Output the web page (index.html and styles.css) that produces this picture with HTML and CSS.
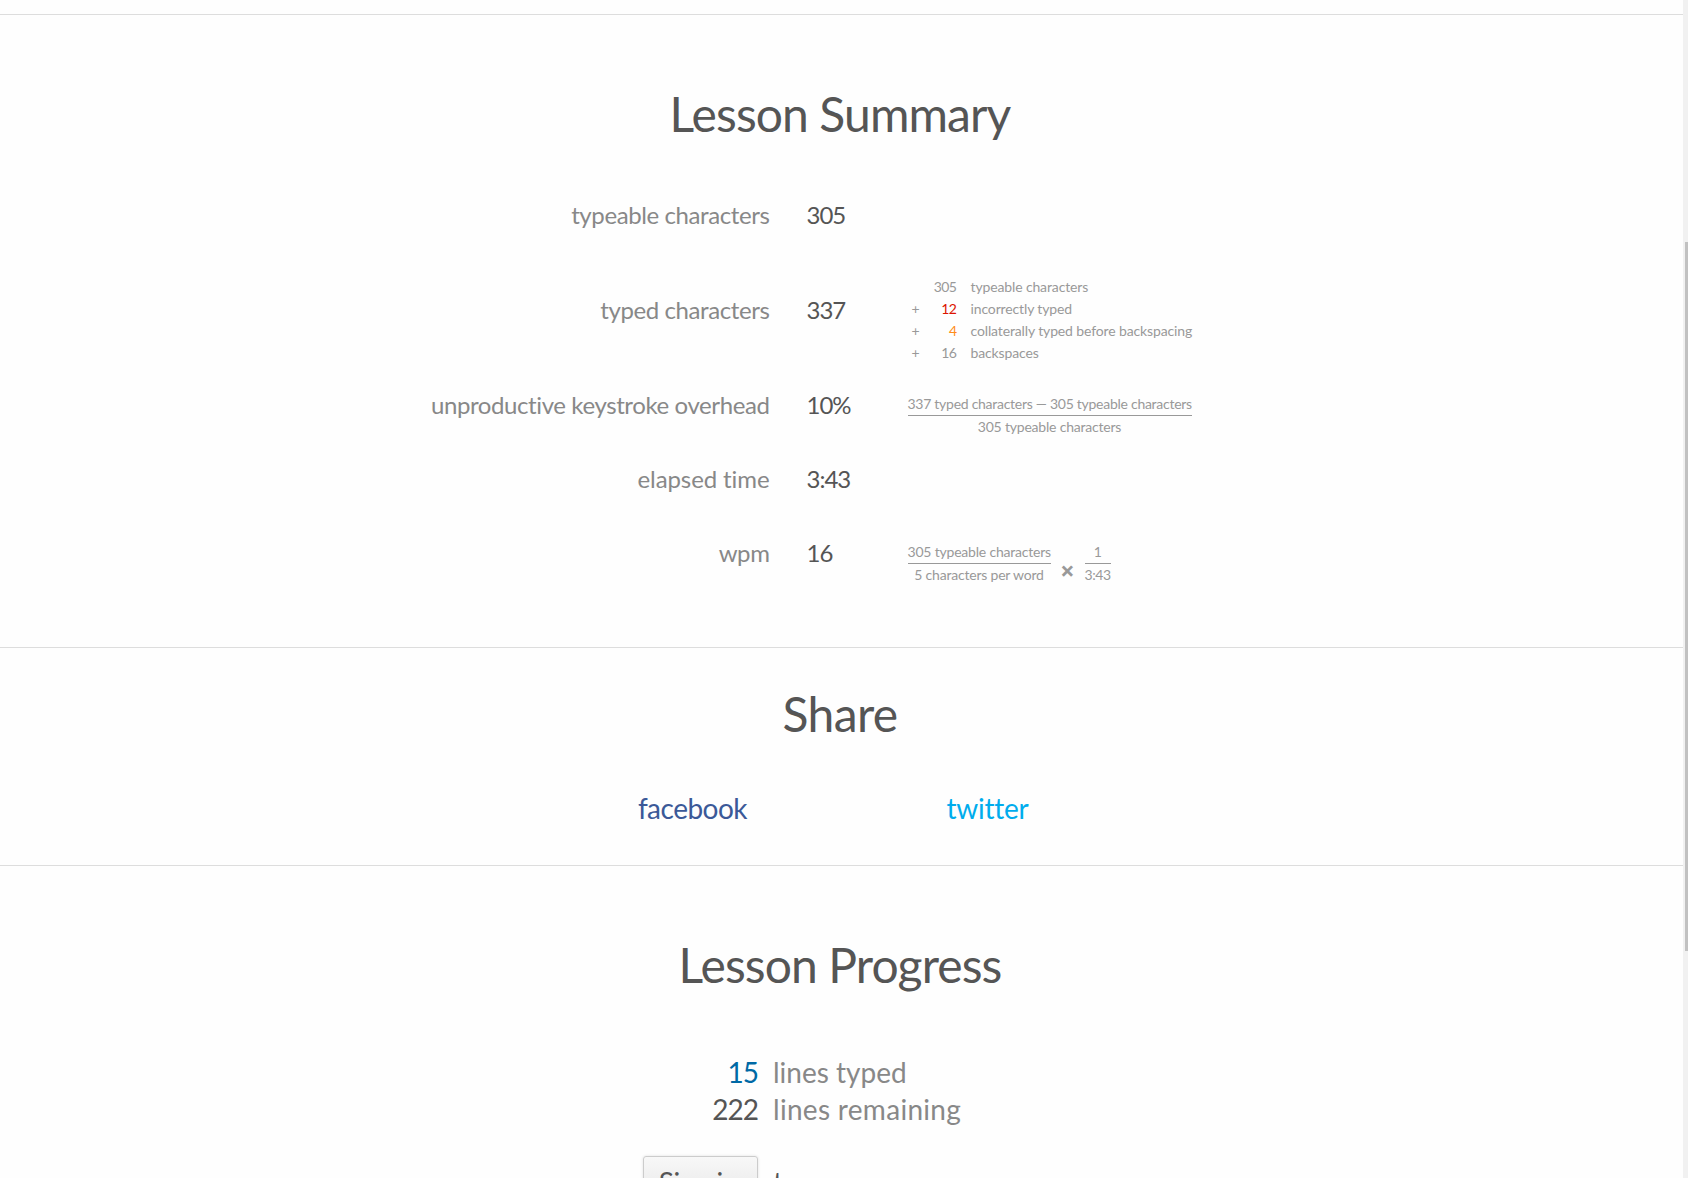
FILE: index.html
```
<!DOCTYPE html>
<html lang="en">
<head>
<meta charset="utf-8">
<title>Lesson Summary</title>
<link rel="stylesheet" href="styles.css">
</head>
<body>
<div class="window">
  <main class="page">
    <div class="strip"></div>
    <section class="section summary">
      <h1 class="title title-summary">Lesson Summary</h1>
      <div class="stats">
        <div class="stat stat-typeable">
          <div class="label">typeable characters</div>
          <div class="value">305</div>
        </div>
        <div class="stat stat-typed">
          <div class="label">typed characters</div>
          <div class="value">337</div>
          <div class="detail sum">
            <span></span><span class="num">305</span><span class="what">typeable characters</span>
            <span class="plus">+</span><span class="num wrong">12</span><span class="what">incorrectly typed</span>
            <span class="plus">+</span><span class="num collateral">4</span><span class="what">collaterally typed before backspacing</span>
            <span class="plus">+</span><span class="num">16</span><span class="what">backspaces</span>
          </div>
        </div>
        <div class="stat">
          <div class="label">unproductive keystroke overhead</div>
          <div class="value">10%</div>
          <div class="detail formula">
            <div class="fraction wide"><span>337 typed characters — 305 typeable characters</span><span class="denominator">305 typeable characters</span></div>
          </div>
        </div>
        <div class="stat">
          <div class="label label-elapsed">elapsed time</div>
          <div class="value">3:43</div>
        </div>
        <div class="stat">
          <div class="label">wpm</div>
          <div class="value">16</div>
          <div class="detail formula">
            <div class="fraction words"><span>305 typeable characters</span><span class="denominator">5 characters per word</span></div>
            <span class="times">×</span>
            <div class="fraction time"><span>1</span><span class="denominator">3:43</span></div>
          </div>
        </div>
      </div>
    </section>
    <section class="section share">
      <h1 class="title title-share">Share</h1>
      <div class="links">
        <a class="link facebook">facebook</a>
        <a class="link twitter">twitter</a>
      </div>
    </section>
    <section class="progress">
      <h1 class="title title-progress">Lesson Progress</h1>
      <div class="lines">
        <span class="count typed">15</span><span class="unit unit-typed">lines typed</span>
        <span class="count">222</span><span class="unit">lines remaining</span>
      </div>
      <div class="signin">
        <button class="button">Sign in</button><span class="after">to</span>
      </div>
    </section>
  </main>
  <div class="scrollbar"><div class="thumb"></div></div>
</div>
</body>
</html>
```
FILE: styles.css
```
* {
  box-sizing: border-box;
}

body {
  margin: 0;
  background: #fefefe;
  color: #555;
  font-family: Lato, sans-serif;
  font-variant-ligatures: none;
}

.window {
  display: flex;
  height: 1178px;
  overflow: hidden;
}

.page {
  width: 1683px;
  flex: none;
}

.scrollbar {
  width: 5px;
  height: 1178px;
  padding: 242px 0 0 2px;
  background: #f1f1f1;
}

.thumb {
  height: 709px;
  background: #c1c1c1;
}

.strip {
  height: 15px;
  border-bottom: 1px solid #ddd;
}

.section {
  border-bottom: 1px solid #ddd;
}

.title {
  margin: 0;
  padding-right: 3px;
  font-size: 48px;
  font-weight: 400;
  line-height: 60px;
  text-align: center;
}

.title-summary { letter-spacing: -0.9px; }
.title-share { letter-spacing: -0.6px; }
.title-progress { letter-spacing: -0.9px; }

.summary {
  height: 633px;
  padding-top: 69px;
}

.stats {
  width: 1000px;
  margin: 54px auto 0;
}

.stat {
  display: grid;
  grid-template-columns: 428px 103px 1fr;
  height: 74px;
  font-size: 24px;
  line-height: 34px;
  white-space: nowrap;
}

.stat-typeable { height: 78px; }

.stat-typed {
  height: 112px;
}

.stat-typed .label,
.stat-typed .value {
  padding-top: 17px;
}

.label {
  color: #888;
  text-align: right;
  letter-spacing: -0.4px;
}

.label-elapsed { letter-spacing: -0.1px; }

.value {
  margin-left: 37px;
  letter-spacing: -1px;
}

.detail {
  margin-left: 35px;
  color: #999;
  font-size: 14px;
  line-height: 22px;
  letter-spacing: -0.2px;
}

.sum {
  display: grid;
  grid-template-columns: 17px 32px 1fr;
  grid-auto-rows: 22px;
}

.plus { padding-left: 4px; }
.num { text-align: right; letter-spacing: -0.5px; }
.what { padding-left: 14px; letter-spacing: -0.13px; }
.wrong { color: #dc1400; }
.collateral { color: #ff8c1a; }

.formula {
  display: flex;
  align-items: flex-start;
  padding-top: 5px;
}

.fraction {
  display: flex;
  flex-direction: column;
  text-align: center;
}

.denominator { border-top: 1px solid #999; }
.wide { width: 284px; letter-spacing: -0.27px; }
.wide .denominator { letter-spacing: -0.2px; }
.words { width: 143px; }
.time { width: 26px; letter-spacing: -0.4px; }

.times {
  width: 34px;
  padding-top: 18px;
  font-family: "Noto Sans", sans-serif;
  font-size: 25px;
  font-weight: 700;
  letter-spacing: 0;
  text-align: center;
}

.share {
  height: 218px;
  padding-top: 36px;
}

.links {
  display: flex;
  justify-content: center;
  width: 590px;
  margin: 46px 0 0 545px;
  font-size: 28px;
  line-height: 37px;
}

.link {
  flex: 1;
  text-align: center;
  letter-spacing: -0.5px;
}

.facebook { color: #3b5998; }
.twitter { color: #00aced; letter-spacing: -0.25px; }

.progress {
  padding-top: 69px;
  font-size: 28px;
  line-height: 37px;
}

.lines {
  display: grid;
  grid-template-columns: 758px 1fr;
  column-gap: 15px;
  margin-top: 59px;
}

.count {
  text-align: right;
  letter-spacing: -1px;
}

.typed { color: #0069a5; }

.unit {
  color: #888;
  letter-spacing: 0.3px;
}

.unit-typed { letter-spacing: 0; }

.signin {
  display: flex;
  margin: 28px 0 0 643px;
}

.button {
  width: 115px;
  height: 52px;
  padding: 0 4px 0 0;
  border: 1px solid #ccc;
  border-radius: 3px;
  background: linear-gradient(#f8f8f8, #e4e4e4);
  box-shadow: 0 0 3px rgba(0, 0, 0, 0.12);
  color: #555;
  font: inherit;
  letter-spacing: -0.3px;
}

.after {
  margin: 8px 0 0 15px;
}
```
